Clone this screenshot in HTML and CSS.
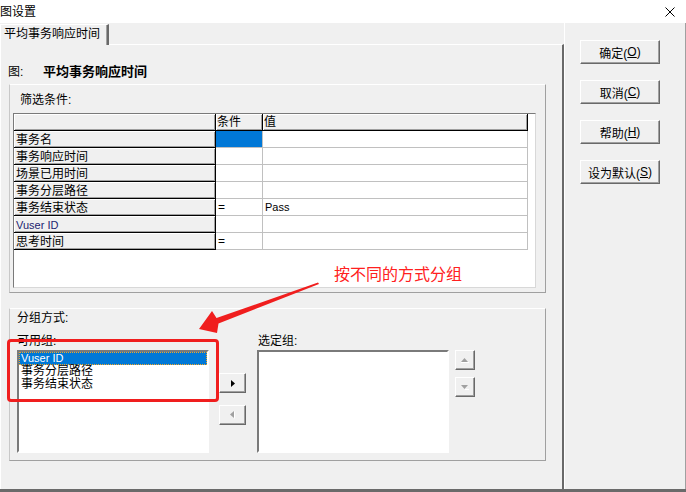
FILE: index.html
```html
<!DOCTYPE html>
<html lang="zh-CN">
<head>
    <meta charset="UTF-8">
    <meta name="viewport" content="width=device-width, initial-scale=1.0">
    <title>图设置</title>
    <link rel="stylesheet" href="styles.css">
</head>
<body>
<div class="dialog">
    <div class="titlebar">
        <span class="title">图设置</span>
        <span class="close">
            <svg width="10" height="10" viewBox="0 0 10 10"><path d="M0.5 0.5L9.5 9.5M9.5 0.5L0.5 9.5" stroke="#000" stroke-width="1"/></svg>
        </span>
    </div>

    <div class="window-body">
        <div class="main">
            <div class="tabs">
                <div class="tab">平均事务响应时间</div>
            </div>

            <div class="panel">
                <div class="graph-row">
                    <span class="graph-label">图:</span>
                    <span class="graph-name">平均事务响应时间</span>
                </div>

                <!-- filter conditions -->
                <div class="group filter">
                    <div class="group-title">筛选条件:</div>
                    <div class="grid">
                        <div class="cell head"></div>
                        <div class="cell head">条件</div>
                        <div class="cell head">值</div>

                        <div class="cell rowhead">事务名</div>
                        <div class="cell data selected"></div>
                        <div class="cell data"></div>

                        <div class="cell rowhead">事务响应时间</div>
                        <div class="cell data"></div>
                        <div class="cell data"></div>

                        <div class="cell rowhead">场景已用时间</div>
                        <div class="cell data"></div>
                        <div class="cell data"></div>

                        <div class="cell rowhead">事务分层路径</div>
                        <div class="cell data"></div>
                        <div class="cell data"></div>

                        <div class="cell rowhead">事务结束状态</div>
                        <div class="cell data">=</div>
                        <div class="cell data latin">Pass</div>

                        <div class="cell rowhead latin blue">Vuser ID</div>
                        <div class="cell data"></div>
                        <div class="cell data"></div>

                        <div class="cell rowhead">思考时间</div>
                        <div class="cell data">=</div>
                        <div class="cell data"></div>
                    </div>
                </div>

                <!-- group by -->
                <div class="group grouping">
                    <div class="group-title">分组方式:</div>
                    <div class="pick">
                        <div class="list-col">
                            <div class="list-label">可用组:</div>
                            <div class="listbox">
                                <div class="item active latin">Vuser ID</div>
                                <div class="item">事务分层路径</div>
                                <div class="item">事务结束状态</div>
                            </div>
                        </div>
                        <div class="move-col">
                            <button class="btn move">
                                <svg width="4" height="7" viewBox="0 0 4 7"><polygon points="0,0 4,3.5 0,7" fill="#000"/></svg>
                            </button>
                            <button class="btn move">
                                <svg width="5" height="8" viewBox="0 0 5 8"><polygon points="4,0 4,7 0,3.5" fill="#a0a0a0"/><path d="M4.5 0.5V7.5" stroke="#fff"/></svg>
                            </button>
                        </div>
                        <div class="list-col">
                            <div class="list-label pad">选定组:</div>
                            <div class="listbox"></div>
                        </div>
                        <div class="order-col">
                            <button class="btn order">
                                <svg width="8" height="5" viewBox="0 0 8 5"><polygon points="0,4 7,4 3.5,0" fill="#a0a0a0"/><path d="M0 4.5H8" stroke="#fff"/></svg>
                            </button>
                            <button class="btn order">
                                <svg width="8" height="5" viewBox="0 0 8 5"><polygon points="0,0 7,0 3.5,4" fill="#a0a0a0"/><path d="M4 4.5H8" stroke="#fff"/></svg>
                            </button>
                        </div>
                    </div>
                </div>
            </div>
        </div>

        <div class="side">
            <button class="btn action">确定(<u>O</u>)</button>
            <button class="btn action">取消(<u>C</u>)</button>
            <button class="btn action">帮助(<u>H</u>)</button>
            <button class="btn action">设为默认(<u>S</u>)</button>
        </div>
    </div>

    <!-- screenshot annotation -->
    <div class="callout-box"></div>
    <div class="callout-text">按不同的方式分组</div>
    <svg class="callout-arrow" width="686" height="492" viewBox="0 0 686 492">
        <polygon points="199,329 212,311 216.5,318 318,282.5 319,284 218.5,323.5 217,333" fill="#f01e1e"/>
    </svg>
</div>
</body>
</html>
```

FILE: styles.css
```css
* {
    box-sizing: border-box;
}
body {
    margin: 0;
    font-family: "Liberation Sans", "Noto Sans CJK SC", sans-serif;
    font-size: 12px;
    color: #000;
    background: #f0f0f0;
}
.dialog {
    position: relative;
    width: 686px;
    height: 492px;
    overflow: hidden;
}
.titlebar {
    height: 23px;
    background: #fff;
    display: flex;
    justify-content: space-between;
    align-items: center;
}
.title {
    line-height: 16px;
}
.close {
    display: flex;
    margin-right: 11px;
}
.window-body {
    display: flex;
    height: 469px;
    border-bottom: 3px solid #6a6a6a;
}
.main {
    width: 564px;
    display: flex;
    flex-direction: column;
}
.tabs {
    height: 21px;
    padding-top: 1px;
    display: flex;
}
.tab {
    position: relative;
    width: 109px;
    height: 21px;
    padding-left: 3px;
    line-height: 18px;
    background: #f0f0f0;
    border-top: 1px solid #fff;
    border-left: 1px solid #fff;
    border-right: 2px solid #696969;
    box-shadow: inset -1px 0 #a0a0a0;
}
.panel {
    height: 445px;
    border-top: 1px solid #fff;
    border-left: 1px solid #fff;
    border-right: 2px solid #696969;
}
.graph-row {
    display: flex;
    margin: 19px 0 0 7px;
    line-height: 16px;
}
.graph-label {
    width: 35px;
}
.graph-name {
    font-size: 13px;
    font-weight: bold;
}
.group {
    margin-left: 8px;
    width: 537px;
    border-top: 1px solid #fff;
    border-left: 1px solid #c8c8c8;
    border-right: 1px solid #a0a0a0;
    border-bottom: 1px solid #a0a0a0;
}
.group-title {
    line-height: 16px;
}
.filter {
    margin-top: 4px;
    height: 209px;
    padding: 7px 0 0 3px;
}
.filter .group-title {
    margin: 0 0 5px 7px;
}
.grid {
    width: 523px;
    height: 175px;
    background: #fff;
    border: 1px solid;
    border-color: #7a7a7a #d8d8d8 #d8d8d8 #7a7a7a;
    display: grid;
    grid-template-columns: 202px 47px 265px;
    grid-auto-rows: 17px;
    align-content: start;
}
.cell {
    white-space: nowrap;
    overflow: hidden;
}
.head {
    padding-left: 1px;
    line-height: 16px;
}
.head, .rowhead {
    background: #f0f0f0;
    border-right: 1px solid #000;
    border-bottom: 1px solid #000;
    box-shadow: inset 1px 1px #fff, inset -1px -1px #a0a0a0;
}
.rowhead {
    padding: 2px 0 0 2px;
    line-height: 14px;
}
.data {
    padding: 1px 0 0 2px;
    line-height: 15px;
    border-right: 1px solid #c0c0c0;
    border-bottom: 1px solid #c0c0c0;
}
.selected {
    background: #0078d7;
}
.latin {
    font-size: 11px;
}
.blue {
    color: #1c2470;
}
.grouping {
    margin-top: 15px;
    height: 153px;
    padding: 1px 0 0 7px;
}
.pick {
    display: flex;
    align-items: flex-start;
    margin-top: 7px;
}
.list-label {
    line-height: 16px;
    margin-bottom: 1px;
}
.list-label.pad {
    padding-left: 1px;
}
.listbox {
    width: 192px;
    height: 103px;
    background: #fff;
    border: 2px solid;
    border-color: #7a7a7a #fff #fff #7a7a7a;
}
.item {
    height: 13px;
    line-height: 13px;
    padding-left: 2px;
    white-space: nowrap;
}
.item.active {
    background: #0078d7;
    color: #fff;
    border: 1px dotted #f5a623;
    line-height: 11px;
    padding-left: 1px;
}
.btn {
    padding: 0;
    margin: 0;
    font: inherit;
    color: #000;
    background: #f0f0f0;
    border: 1px solid;
    border-color: #fff #696969 #696969 #fff;
    box-shadow: inset -1px -1px #a0a0a0;
    display: flex;
    align-items: center;
    justify-content: center;
}
.move-col {
    display: flex;
    flex-direction: column;
    gap: 12px;
    margin: 40px 11px 0 10px;
}
.move {
    width: 27px;
    height: 20px;
}
.order-col {
    display: flex;
    flex-direction: column;
    gap: 7px;
    margin: 17px 0 0 6px;
}
.order {
    width: 20px;
    height: 20px;
}
.side {
    width: 122px;
    border-left: 1px solid #fff;
    border-right: 1px solid #a0a0a0;
    padding: 17px 0 0 15px;
    display: flex;
    flex-direction: column;
    gap: 16px;
}
.action {
    width: 80px;
    height: 24px;
}
.callout-box {
    position: absolute;
    left: 7px;
    top: 339px;
    width: 212px;
    height: 63px;
    border: 3px solid #f01e1e;
    border-radius: 4px;
}
.callout-text {
    position: absolute;
    left: 334px;
    top: 265px;
    font-size: 16px;
    line-height: 20px;
    color: #ff2020;
}
.callout-arrow {
    position: absolute;
    left: 0;
    top: 0;
    pointer-events: none;
}
```
